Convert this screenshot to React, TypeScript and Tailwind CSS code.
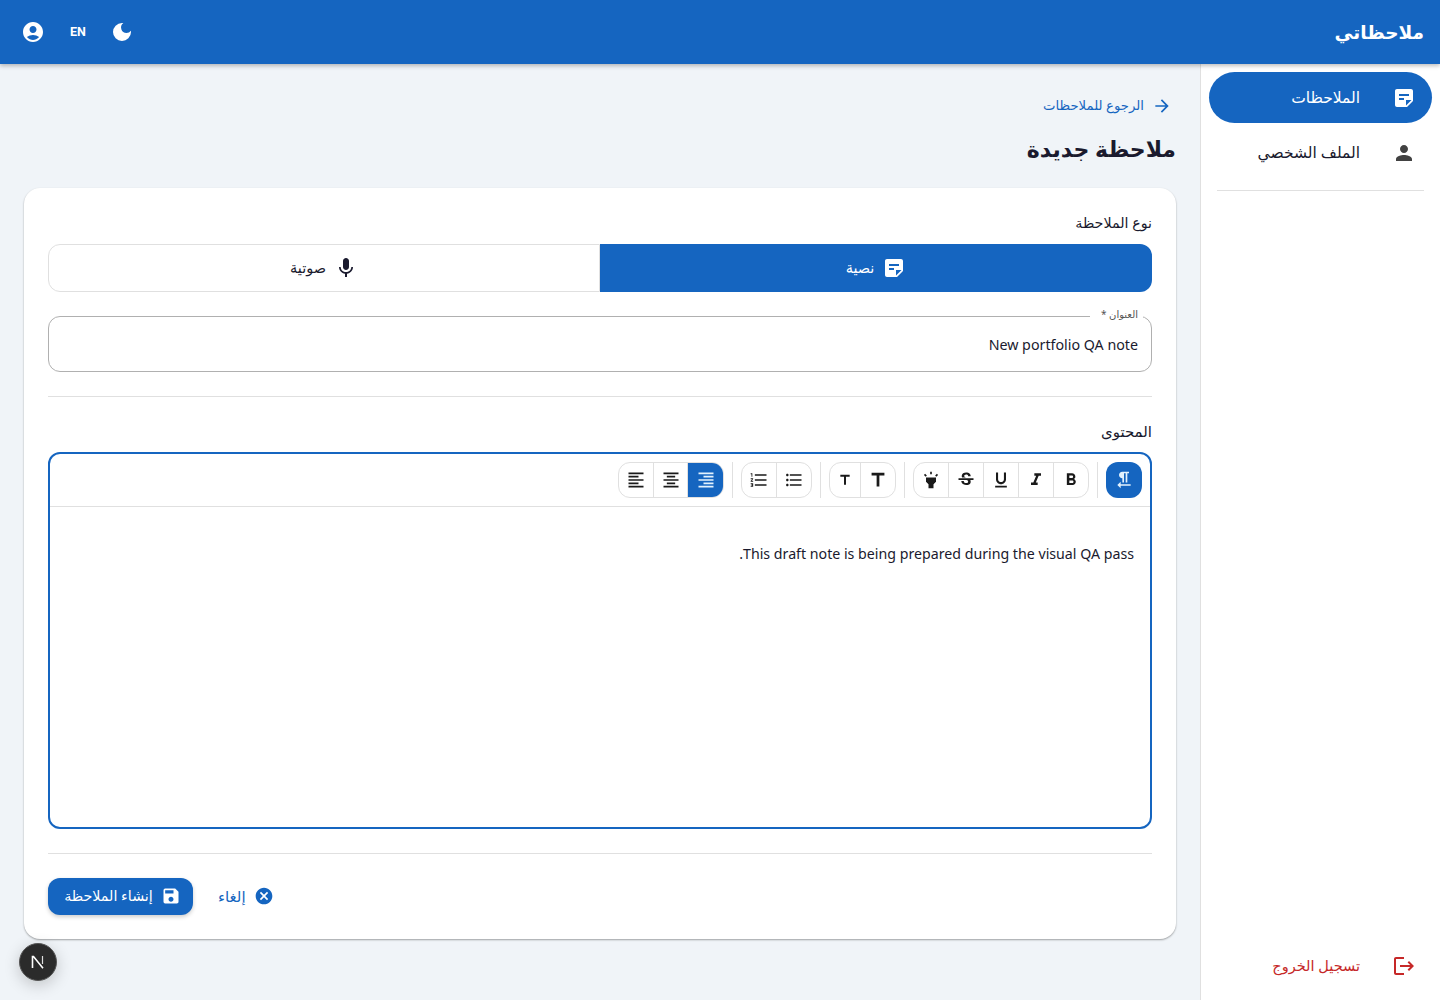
import React from "react";
import {
  MdAccountCircle, MdDarkMode, MdStickyNote2, MdPerson, MdLogout, MdArrowForward, MdMic,
  MdFormatTextdirectionRToL, MdFormatBold, MdFormatItalic, MdFormatUnderlined, MdStrikethroughS,
  MdHighlight, MdTitle, MdFormatListBulleted, MdFormatListNumbered, MdFormatAlignRight, MdFormatAlignCenter,
  MdFormatAlignLeft, MdSave, MdCancel,
} from "react-icons/md";

const FONT = "font-['Noto_Sans','DejaVu_Sans',sans-serif]";

function ToolGroup({ items }: { items: { icon: React.ReactNode; active?: boolean; w?: string }[] }) {
  return (
    <div className="flex h-9 rounded-xl border border-[#e0e0e0] overflow-hidden">
      {items.map((it, i) => (
        <div
          key={i}
          className={`flex items-center justify-center h-full ${it.w ?? "w-[35px]"} ${i > 0 ? "border-r border-[#e0e0e0]" : ""} ${it.active ? "bg-[#1565c0] text-[#e3f2fd]" : "text-[#1a1a1a]"}`}
        >
          {it.icon}
        </div>
      ))}
    </div>
  );
}

const Sep = () => <div className="w-px h-9 bg-[#e0e0e0] mx-2" />;

export default function App() {
  return (
    <div dir="rtl" className={`${FONT} relative h-[1000px] w-[1440px] overflow-hidden bg-[#f0f4f8] text-[#1a1a2e]`}>
      <header className="relative z-10 h-16 bg-[#1565c0] flex items-center justify-between px-4 text-white shadow-[0_2px_4px_rgba(0,0,0,0.25)]">
        <div className="text-[18.5px] font-bold">ملاحظاتي</div>
        <div className="flex items-center gap-[20px] flex-row-reverse pl-[5px]">
          <MdAccountCircle size={24} />
          <span className="text-[12.5px] font-bold font-['Roboto',sans-serif] w-[26px] text-center">EN</span>
          <MdDarkMode size={24} className="-ml-px" />
        </div>
      </header>

      <div className="flex h-[936px]">
        <aside className="w-[240px] shrink-0 bg-white border-l border-[#e0e0e0] flex flex-col pt-2 px-2">
          <div className="h-[51px] rounded-full bg-[#1565c0] text-white flex items-center pr-4">
            <MdStickyNote2 size={24} />
            <span className="mr-8 text-[15.5px]">الملاحظات</span>
          </div>
          <div className="h-[51px] mt-1 flex items-center pr-4 text-[#1a1a2e]">
            <MdPerson size={24} className="text-[#424242]" />
            <span className="mr-8 text-[15.5px]">الملف الشخصي</span>
          </div>
          <div className="mt-3 mx-2 h-px bg-[#e0e0e0]" />
          <div className="mt-auto mb-[9px] h-[51px] flex items-center pr-4 text-[#c62828]">
            <MdLogout size={24} />
            <span className="mr-8 text-[14.5px]">تسجيل الخروج</span>
          </div>
        </aside>

        <main className="flex-1 p-6">
          <div className="h-9 flex items-center text-[#1565c0] text-[13.25px] pr-1">
            <MdArrowForward size={20} className="ml-2" />
            <span>الرجوع للملاحظات</span>
          </div>
          <h1 className="mt-[6px] text-[22px] leading-[36px] font-bold text-[#1a1a2e] h-[37px]">ملاحظة جديدة</h1>
          <section className="mt-[21px] h-[751px] bg-white rounded-2xl p-6 shadow-[0_1px_2px_rgba(0,0,0,0.35)]">
            <div className="text-[14.25px] h-8 leading-[22px]">نوع الملاحظة</div>
            <div className="flex h-12">
              <div className="w-1/2 bg-[#1565c0] text-white rounded-r-xl flex items-center justify-center gap-2">
                <MdStickyNote2 size={24} />
                <span className="text-[14.5px]">نصية</span>
              </div>
              <div className="w-1/2 rounded-l-xl border border-[#e0e0e0] flex items-center justify-center gap-2 text-[#1a1a2e]">
                <MdMic size={24} />
                <span className="text-[14.5px]">صوتية</span>
              </div>
            </div>

            <div className="relative mt-6 h-14 rounded-xl border border-[#b0b0b0] flex items-center px-[13px]">
              <span className="absolute -top-[10px] right-[8px] bg-white pr-[5px] pl-[11px] text-[10px] leading-[14px] text-[#555]">العنوان *</span>
              <span className="text-[14.25px] text-[#1a1a2e] pt-px">New portfolio QA note</span>
            </div>

            <div className="mt-6 h-px bg-[#e0e0e0]" />

            <div className="mt-6 text-[15px] h-[31px] leading-[20px]">المحتوى</div>
            <div className="h-[377px] rounded-xl border-2 border-[#1565c0] flex flex-col">
              <div className="h-[53px] border-b border-[#e0e0e0] flex items-center pr-2 shrink-0">
                <div className="h-9 w-9 rounded-xl bg-[#1565c0] text-[#e3f2fd] flex items-center justify-center"><MdFormatTextdirectionRToL size={20} /></div>
                <Sep />
                <ToolGroup items={[
                  { icon: <MdFormatBold size={20} />, w: "w-[34px]" },
                  { icon: <MdFormatItalic size={20} /> },
                  { icon: <MdFormatUnderlined size={20} /> },
                  { icon: <MdStrikethroughS size={20} /> },
                  { icon: <MdHighlight size={20} /> },
                ]} />
                <Sep />
                <ToolGroup items={[
                  { icon: <MdTitle size={22} />, w: "w-[34px]" },
                  { icon: <MdTitle size={16} />, w: "w-[31px]" },
                ]} />
                <Sep />
                <ToolGroup items={[
                  { icon: <MdFormatListBulleted size={20} />, w: "w-[34px]" },
                  { icon: <MdFormatListNumbered size={20} /> },
                ]} />
                <Sep />
                <ToolGroup items={[
                  { icon: <MdFormatAlignRight size={20} />, active: true },
                  { icon: <MdFormatAlignCenter size={20} />, w: "w-[34px]" },
                  { icon: <MdFormatAlignLeft size={20} /> },
                ]} />
              </div>
              <div className="px-4 pt-[35px] text-[14.2px] leading-[24px] text-[#1a1a2e]">This draft note is being prepared during the visual QA pass.</div>
            </div>

            <div className="mt-6 h-px bg-[#e0e0e0]" />

            <div className="mt-6 flex items-center gap-[24px]">
              <div className="flex items-center gap-2 text-[#1565c0] text-[15px] mr-auto pb-px pl-px">
                <MdCancel size={20} />
                <span>إلغاء</span>
              </div>
              <div className="h-[37px] w-[145px] rounded-xl bg-[#1565c0] text-white flex items-center justify-center gap-2 text-[14.25px] font-medium pb-px pl-1 shadow-[0_2px_4px_rgba(0,0,0,0.2)]">
                <MdSave size={20} />
                <span>إنشاء الملاحظة</span>
              </div>
            </div>
          </section>
        </main>
      </div>

      <div className="absolute left-[19px] top-[943px] w-[38px] h-[38px] rounded-full bg-[#2b2b2b] border border-[#555] flex items-center justify-center shadow-[0_4px_16px_rgba(0,0,0,0.2)]">
        <svg width="14" height="14" viewBox="0 0 14 14" fill="none">
          <path d="M1.5 13V1.5h1L12 13.2" stroke="#fff" strokeWidth="1.6" />
          <path d="M11.5 1v8" stroke="#ddd" strokeWidth="1.2" />
        </svg>
      </div>
    </div>
  );
}
